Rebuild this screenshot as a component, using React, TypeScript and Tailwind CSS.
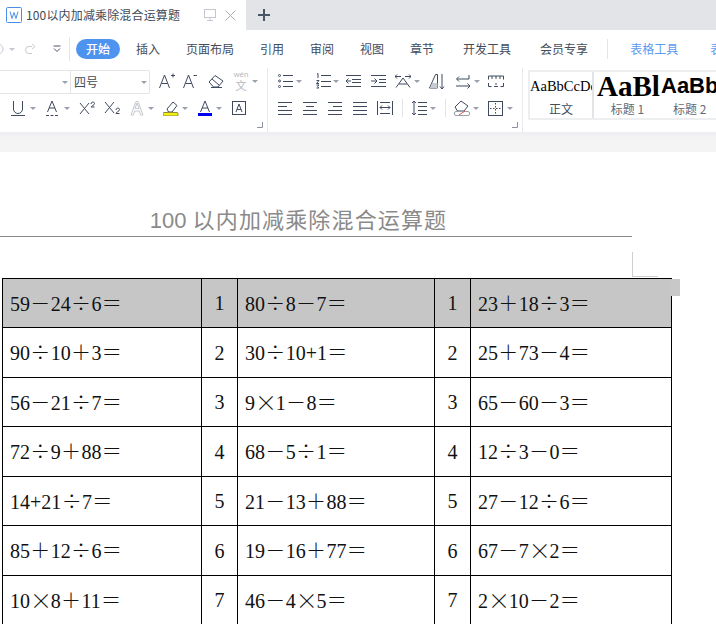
import React from "react";

const INK = "#3f4a5f";
function Ic({ w = 16, h = 16, className = "", children }: { w?: number; h?: number; className?: string; children: React.ReactNode }) {
  return (
    <svg width={w} height={h} viewBox={`0 0 ${w} ${h}`} fill="none" stroke={INK} strokeWidth="1" className={"shrink-0 " + className}>
      {children}
    </svg>
  );
}
function Caret({ className = "" }: { className?: string }) {
  return <span className={"shrink-0 w-0 h-0 border-l-[3px] border-r-[3px] border-t-[3px] border-l-transparent border-r-transparent border-t-[#9aa1ad] " + className} />;
}
function Corner() {
  return (
    <svg width="6" height="6" viewBox="0 0 6 6" fill="none" stroke="#8b93a0" className="absolute right-[4px] bottom-[4px]">
      <path d="M5.5 0v5.5H0" />
    </svg>
  );
}
const Lines = ({ rows }: { rows: [number, number, number][] }) => (
  <>
    {rows.map(([y, a, b], i) => (
      <path key={i} d={`M${a} ${y}.5H${b}`} />
    ))}
  </>
);

const SYM = "÷×＝＋－";
function Expr({ t }: { t: string }) {
  return (
    <>
      {t.split("").map((c, i) =>
        SYM.includes(c) ? (
          <span key={i} className={"inline-block w-[20.7px] text-center font-light font-['Noto_Sans_CJK_SC',sans-serif]" + (c === "×" ? " text-[22px] leading-[20px] align-[-1px]" : "")}>
            {c}
          </span>
        ) : (
          <span key={i}>{c}</span>
        )
      )}
    </>
  );
}

const DATA: [string, string, string][] = [
  ["59－24÷6＝", "80÷8－7＝", "23＋18÷3＝"],
  ["90÷10＋3＝", "30÷10+1＝", "25＋73－4＝"],
  ["56－21÷7＝", "9×1－8＝", "65－60－3＝"],
  ["72÷9＋88＝", "68－5÷1＝", "12÷3－0＝"],
  ["14+21÷7＝", "21－13＋88＝", "27－12÷6＝"],
  ["85＋12÷6＝", "19－16＋77＝", "67－7×2＝"],
  ["10×8＋11＝", "46－4×5＝", "2×10－2＝"],
];
const HEIGHTS = ["h-[49px]", "h-[50px]", "h-[49px]", "h-[50px]", "h-[49px]", "h-[50px]", "h-[49px]"];
const MENU: [string, string][] = [
  ["插入", "ml-[16px]"],
  ["页面布局", "ml-[26px]"],
  ["引用", "ml-[26px]"],
  ["审阅", "ml-[26px]"],
  ["视图", "ml-[26px]"],
  ["章节", "ml-[26px]"],
  ["开发工具", "ml-[29px]"],
  ["会员专享", "ml-[29px]"],
];

export default function App() {
  return (
    <div className="w-[716px] h-[624px] overflow-hidden bg-white flex flex-col font-['Noto_Sans_CJK_SC',sans-serif]">
      {/* Tab bar */}
      <div className="h-[30px] shrink-0 flex bg-[#e3e4e8]">
        <div className="w-[246px] bg-white flex items-center">
          <svg width="16" height="16" viewBox="0 0 16 16" fill="none" className="ml-[6px] shrink-0">
            <rect x="0.5" y="0.5" width="15" height="15" rx="1" stroke="#4a8ee8" />
            <path d="M4 4.5l2 7 2-6 2 6 2-7" stroke="#4a8ee8" />
          </svg>
          <span className="ml-[4px] w-[154px] text-[12px] tracking-[0.15px] leading-[30px] text-[#414a58] whitespace-nowrap">100以内加减乘除混合运算题</span>
          <svg width="12" height="12" viewBox="0 0 12 12" fill="none" stroke="#c4c8ce" className="ml-[24px] shrink-0">
            <rect x="0.5" y="0.5" width="11" height="8" />
            <path d="M6 8.5v3M3 11.5h6" />
          </svg>
          <svg width="11" height="11" viewBox="0 0 11 11" fill="none" stroke="#a9aeb6" className="ml-[9px] shrink-0">
            <path d="M0.5 0.5l10 10M10.5 0.5l-10 10" />
          </svg>
        </div>
        <svg width="12" height="12" viewBox="0 0 12 12" fill="none" stroke="#4a5568" strokeWidth="2" className="ml-[12px] self-center shrink-0">
          <path d="M6 0v12M0 6h12" />
        </svg>
      </div>

      {/* Menu row */}
      <div className="h-[38px] shrink-0 flex items-center text-[12px] text-[#434c5a] whitespace-nowrap">
        <svg width="4" height="12" viewBox="0 0 4 12" fill="none" stroke="#c9ccd2" className="shrink-0">
          <path d="M-4 1a5 5 0 1 1 0 10" transform="translate(2 0)" />
        </svg>
        <Caret className="ml-[5px] border-t-[#c5c8ce]" />
        <svg width="12" height="12" viewBox="0 0 12 12" fill="none" stroke="#c9ccd2" className="ml-[9px] shrink-0">
          <path d="M8 3.5H5a3.5 3.5 0 0 0 0 7h3M8 1l3 2.5L8 6" />
        </svg>
        <svg width="8" height="8" viewBox="0 0 8 8" fill="none" stroke="#4a5568" className="ml-[17px] shrink-0">
          <path d="M0.5 1h7M1 3.5l3 3 3-3" />
        </svg>
        <span className="ml-[8px] w-px h-[24px] bg-[#e3e4e8] shrink-0" />
        <span className="ml-[6px] w-[44px] h-[20px] rounded-full bg-[#4e93ee] text-white font-medium flex items-center justify-center shrink-0">开始</span>
        {MENU.map(([t, c]) => (
          <span key={t} className={c}>{t}</span>
        ))}
        <span className="ml-[19px] w-px h-[20px] bg-[#e3e4e8] shrink-0" />
        <span className="ml-[22px] text-[#5b9bf0]">表格工具</span>
        <span className="ml-[32px] text-[#5b9bf0]">表</span>
      </div>

      {/* Ribbon */}
      <div className="h-[64px] shrink-0 flex">
        {/* Font group */}
        <div className="relative w-[268px] shrink-0 border-r border-[#e8e9ec] flex flex-col">
          <div className="h-[26px] flex items-center">
            <div className="w-[150px] h-[24px] mt-[2px] shrink-0 flex items-center border border-l-0 border-[#e3e4e8] rounded-r-[2px] text-[12px] text-[#434c5a]">
              <span className="w-[71px] h-full flex items-center justify-end pr-[2px] border-r border-[#e3e4e8]"><Caret /></span>
              <span className="ml-[3px] flex-1">四号</span>
              <Caret className="mr-[2px]" />
            </div>
            <Ic w={16} h={18} className="ml-[9px]"><path d="M0.5 16L5.5 3l5 13M2.5 11.5h6M12 3.5h4M14 1.5v4" /></Ic>
            <Ic w={14} h={18} className="ml-[8px]"><path d="M0.5 16L5.5 3l5 13M2.5 11.5h6M10.5 3.5h3.5" /></Ic>
            <Ic w={16} h={16} className="ml-[11px]"><path d="M1 9l6-6.5L15 8l-5 6H5.5zM4 6l7 6M3 14.5h11" /></Ic>
            <span className="ml-[9px] w-[16px] h-[22px] shrink-0 flex flex-col items-center text-[#b3b7be]">
              <span className="h-[9px] text-[8px] leading-[9px] font-['Liberation_Sans',sans-serif]">wén</span>
              <span className="h-[13px] text-[11px] leading-[13px]">文</span>
            </span>
            <Caret className="ml-[3px]" />
          </div>
          <div className="h-[24px] mt-[2px] flex items-center">
            <Ic w={14} className="ml-[11px]"><path d="M2.5 1v8a4.5 4.5 0 0 0 9 0V1M0 15.5h14" /></Ic>
            <Caret className="ml-[5px]" />
            <Ic w={14} className="ml-[9px]"><path d="M2.500 12L7 1l4.500 11M4 8h6M1 15.500h3M5.500 15.500h3M10 15.500h3" /></Ic>
            <Caret className="ml-[5px]" />
            <Ic className="ml-[9px]"><path d="M1 3l9 11M10 3L1 14M12 4c0-2.500 3.500-2.500 3.500-.5S12 6 12 7h3.500" strokeWidth="1" /></Ic>
            <Ic className="ml-[9px]"><path d="M1 2l9 11M10 2L1 13M12 10c0-2.500 3.500-2.500 3.500-.5S12 12 12 13.500h3.500" /></Ic>
            <Ic w={14} className="ml-[10px]"><path d="M1 15L6 1.500h2L13 15h-2.500L9.500 11h-5L3.500 15zM5 8.500h4L7 3z" stroke="#c5c8ce" /></Ic>
            <Caret className="ml-[4px]" />
            <svg width="16" height="16" viewBox="0 0 16 16" fill="none" stroke={INK} className="ml-[9px] shrink-0">
              <path d="M4 9l6-7 4 3.500-5 6.500H5.500z" />
              <rect x="0" y="12.500" width="15" height="3.500" rx="1" fill="#f5ee16" stroke="#8d8a3a" />
            </svg>
            <Caret className="ml-[3px]" />
            <svg width="14" height="16" viewBox="0 0 14 16" fill="none" stroke={INK} className="ml-[10px] shrink-0">
              <path d="M2.500 12L7 1l4.500 11M4 8h6" />
              <rect x="0" y="13" width="14" height="3" fill="#0000ee" stroke="none" />
            </svg>
            <Caret className="ml-[4px]" />
            <Ic w={14} h={14} className="ml-[10px]"><rect x="0.5" y="0.5" width="13" height="13" /><path d="M4 11l3-8 3 8M5 8.500h4" /></Ic>
          </div>
          <Corner />
        </div>

        {/* Paragraph group */}
        <div className="relative w-[255px] shrink-0 border-r border-[#e8e9ec] flex flex-col">
          <div className="h-[26px] flex items-center">
            <Ic w={15} className="ml-[10px]"><circle cx="1.500" cy="2.500" r="1" /><circle cx="1.500" cy="8" r="1" /><circle cx="1.500" cy="13.500" r="1" /><Lines rows={[[2, 5, 15], [8, 5, 15], [13, 5, 15]]} /></Ic>
            <Caret className="ml-[3px]" />
            <Ic w={15} className="ml-[14px]"><path d="M1 1l1-.5V5M0.500 7.500h2.500l-2.500 3h2.500M.5 12h2.500l-1.500 1.500 1.500 1.500h-2.500" /><Lines rows={[[2, 5, 15], [8, 5, 15], [13, 5, 15]]} /></Ic>
            <Caret className="ml-[2px]" />
            <Ic className="ml-[6px]"><Lines rows={[[2, 1, 16], [13, 1, 16], [6, 7, 16], [9, 7, 16]]} /><path d="M1 8h5M3.500 5.500L1 8l2.500 2.500" /></Ic>
            <Ic className="ml-[10px]"><Lines rows={[[2, 0, 15], [13, 0, 15], [6, 8, 15], [9, 8, 15]]} /><path d="M0 8h6M3.500 5.500L6 8l-2.500 2.500" /></Ic>
            <Ic className="ml-[8px]"><path d="M0 3.500h6M2 1.500L0 3.500l2 2M10 3.500h6M14 1.500l2 2-2 2M1 14.500L8 5l7 9.500M4 11h8" /></Ic>
            <Caret className="ml-[3px]" />
            <svg width="16" height="17" viewBox="0 0 16 17" fill="none" stroke={INK} className="ml-[9px] shrink-0">
              <path d="M0.500 15L6.500 1.500h2V15z" />
              <path d="M3 10h5.500V15H1z" fill="#c7ccd4" stroke="none" />
              <path d="M13 1v15M11 13.500l2 2.500 2-2.500" />
            </svg>
            <Ic className="ml-[10px]"><path d="M14 2v4H2M4 3.500L1.500 6 4 8.500M1 13h14M12.500 10.500L15 13l-2.500 2.500" /></Ic>
            <Caret className="ml-[3px]" />
            <Ic h={12} className="ml-[8px]"><path d="M0.500 4.500V1h15v3.500M0.500 8v3.500h3M6 11.500h4M12.500 11.500h3V8M4 1v3M8 1v3M12 1v3M8 8v2" /></Ic>
          </div>
          <div className="h-[24px] mt-[2px] flex items-center">
            <Ic w={14} className="ml-[10px]"><Lines rows={[[2, 0, 14], [6, 0, 9], [10, 0, 14], [14, 0, 14]]} /></Ic>
            <Ic w={14} className="ml-[11px]"><Lines rows={[[2, 0, 14], [6, 3, 11], [10, 0, 14], [14, 0, 14]]} /></Ic>
            <Ic w={14} className="ml-[11px]"><Lines rows={[[2, 0, 14], [6, 5, 14], [10, 0, 14], [14, 0, 14]]} /></Ic>
            <Ic w={14} className="ml-[11px]"><Lines rows={[[2, 0, 14], [6, 0, 14], [10, 0, 14], [14, 0, 14]]} /></Ic>
            <Ic className="ml-[10px]"><path d="M0.500 1v14M15.500 1v14M3 2.500h10M3 7.500h10M3 13.500h10M5 5.500L3 7.500l2 2M11 5.500l2 2-2 2" /></Ic>
            <span className="ml-[9px] w-px h-[18px] bg-[#e3e4e8] shrink-0" />
            <Ic className="ml-[8px]"><path d="M3 1v14M1 3l2-2 2 2M1 13l2 2 2-2" /><Lines rows={[[2, 7, 16], [6, 7, 16], [10, 7, 16], [14, 7, 16]]} /></Ic>
            <Caret className="ml-[3px]" />
            <span className="ml-[9px] w-px h-[18px] bg-[#e3e4e8] shrink-0" />
            <svg width="16" height="16" viewBox="0 0 16 16" fill="none" stroke={INK} className="ml-[8px] shrink-0">
              <path d="M1 7l6-6 7 5-4 5H3.500z" />
              <rect x="0.500" y="11.500" width="15" height="4" rx="1.500" stroke="#9aa1ad" />
              <path d="M5 15l6-4" stroke="#e8574e" />
            </svg>
            <Caret className="ml-[3px]" />
            <svg width="15" height="15" viewBox="0 0 15 15" fill="none" stroke={INK} className="ml-[9px] shrink-0">
              <rect x="0.500" y="0.500" width="14" height="14" />
              <path d="M7.500 2v11M2 7.500h11" strokeDasharray="1.500 1.500" />
            </svg>
            <Caret className="ml-[4px]" />
          </div>
          <Corner />
        </div>

        {/* Style gallery */}
        <div className="ml-[5px] mt-[2px] h-[50px] flex-1 flex border-2 border-r-0 border-[#eceef0] rounded-l-[2px] overflow-hidden">
          <div className="w-[64px] shrink-0 border-r-2 border-[#e3e4e8] flex flex-col items-center overflow-hidden">
            <span className="h-[28px] w-full flex items-center text-[14.500px] leading-none text-black whitespace-nowrap overflow-hidden font-['Liberation_Serif',serif]">AaBbCcDd</span>
            <span className="text-[12px] leading-[18px] text-[#434c5a]">正文</span>
          </div>
          <div className="w-[67px] shrink-0 flex flex-col items-center overflow-hidden">
            <span className="h-[28px] w-full pl-[3px] flex items-center text-[29px] font-bold leading-none text-black whitespace-nowrap overflow-hidden font-['Liberation_Serif',serif]">AaBl</span>
            <span className="text-[12px] leading-[18px] text-[#626a77]">标题 1</span>
          </div>
          <div className="w-[58px] shrink-0 flex flex-col overflow-hidden">
            <span className="h-[28px] w-full flex items-center text-[22px] font-bold leading-none text-black whitespace-nowrap overflow-hidden font-['Liberation_Sans',sans-serif]">AaBb</span>
            <span className="ml-[12px] text-[12px] leading-[18px] text-[#626a77] whitespace-nowrap">标题 2</span>
          </div>
        </div>
      </div>

      {/* Ribbon shadow / workspace strip */}
      <div className="h-[20px] shrink-0 bg-gradient-to-b from-[#ecedef] to-[#f4f4f5] to-30%" />

      {/* Document page */}
      <div className="relative flex-1 min-h-0 bg-white">
        <h1 className="w-[632px] h-[85px] pt-[53px] border-b border-[#8a8a8a] pr-[35px] text-center text-[22px] leading-[31px] font-normal text-[#8a8a8a] whitespace-nowrap font-['Liberation_Sans','Noto_Sans_CJK_SC',sans-serif]">
          100 <span className="tracking-[1.15px]">以内加减乘除混合运算题</span>
        </h1>
        <div className="absolute left-[632px] top-[100px] w-[26px] h-[25px] border-l border-b border-[#cfcfcf]" />
        <div className="absolute left-[671px] top-[127px] w-[9px] h-[17px] bg-[#c8c8c8]" />
        <table className="mt-[41px] ml-[2px] border-collapse table-fixed w-[669px] text-[20px] text-[#111] font-['Liberation_Serif','Noto_Sans_CJK_SC',serif]">
          <colgroup>
            <col className="w-[199px]" />
            <col className="w-[36px]" />
            <col className="w-[197px]" />
            <col className="w-[36px]" />
            <col className="w-[201px]" />
          </colgroup>
          <tbody>
            {DATA.map((r, i) => (
              <tr key={i} className={HEIGHTS[i] + (i === 0 ? " bg-[#c6c6c6]" : "")}>
                <td className="border border-black pl-[7px] p-0 whitespace-nowrap"><Expr t={r[0]} /></td>
                <td className="border border-black text-center p-0">{i + 1}</td>
                <td className="border border-black pl-[7px] p-0 whitespace-nowrap"><Expr t={r[1]} /></td>
                <td className="border border-black text-center p-0">{i + 1}</td>
                <td className="border border-black pl-[7px] p-0 whitespace-nowrap"><Expr t={r[2]} /></td>
              </tr>
            ))}
          </tbody>
        </table>
      </div>
    </div>
  );
}
